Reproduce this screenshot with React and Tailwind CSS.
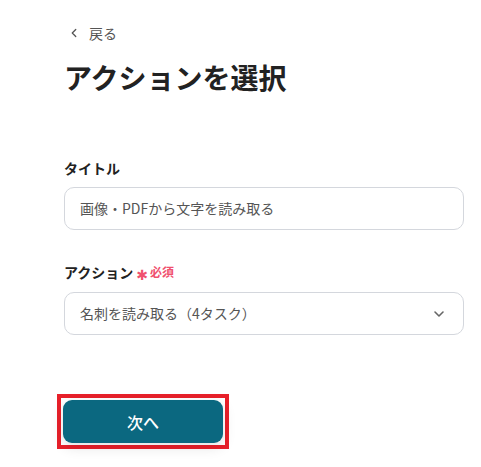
import { ChevronDown, ChevronLeft } from "lucide-react";

const font = { fontFamily: '"Noto Sans CJK JP", "Noto Sans", sans-serif' };

export default function App() {
  return (
    <div className="w-[481px] h-[467px] bg-white text-[#222]" style={font}>
      <div className="pl-[64px] pr-[17px] pt-[23px]">
        <div className="flex items-center gap-[8px] h-[20px] pl-[3px] text-[14px] text-[#555]">
          <ChevronLeft className="w-[14px] h-[14px]" strokeWidth={2.2} />
          <span>戻る</span>
        </div>

        <h1 className="mt-[16px] text-[28px] leading-[36px] font-bold text-[#222]">
          アクションを選択
        </h1>

        <div className="mt-[63px] text-[14px] leading-[20px] font-bold">タイトル</div>
        <div className="mt-[9px] h-[43px] rounded-[10px] border border-[#d4d7dd] flex items-center px-[15px] text-[14px] text-[#555]">
          画像・PDFから文字を読み取る
        </div>

        <div className="mt-[32px] flex items-center text-[14px] leading-[20px] font-bold">
          <span>アクション</span>
          <span
            className="ml-[3px] mt-[5px] text-[#f0506e] text-[14px] leading-none"
            style={{ fontFamily: '"DejaVu Sans", sans-serif' }}
          >
            ✱
          </span>
          <span className="ml-[2px] text-[#f0506e] text-[12px]">必須</span>
        </div>
        <div className="mt-[10px] h-[43px] rounded-[10px] border border-[#d4d7dd] flex items-center justify-between pl-[15px] pr-[16px] text-[14px] text-[#555]">
          <span>名刺を読み取る（4タスク）</span>
          <ChevronDown className="w-[16px] h-[16px] text-[#666]" strokeWidth={2.4} />
        </div>

        <div className="mt-[59px] -ml-[7px] w-[172px] h-[55px] border-[4px] border-[#e8202a] p-[2px]">
          <div className="h-full rounded-[9px] bg-[#0b6880] shadow-[0_4px_14px_rgba(0,0,0,0.12)] flex items-center justify-center text-white text-[16px] font-medium">
            次へ
          </div>
        </div>
      </div>
    </div>
  );
}
